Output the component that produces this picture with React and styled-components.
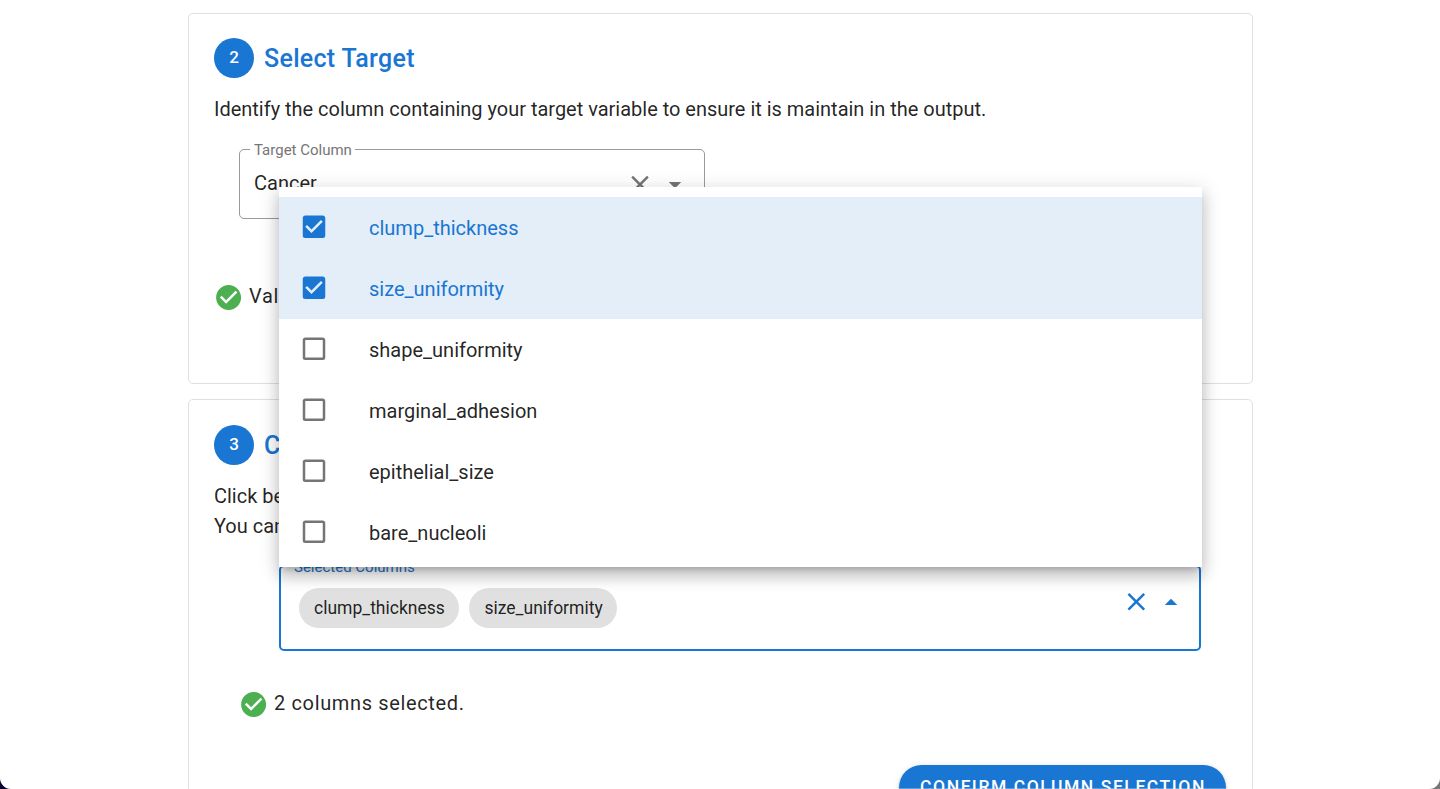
import React from "react";
import styled, { createGlobalStyle } from "styled-components";

const blue = "#1976d2";
const ink = "rgba(0, 0, 0, 0.87)";

const GlobalStyle = createGlobalStyle`
  *, *::before, *::after { box-sizing: border-box; }
  html, body { margin: 0; height: 100%; overflow: hidden; }
  body {
    background: linear-gradient(90deg, #0b0330 0%, #0b0330 50%, #777 50%, #777 100%);
    font-family: Roboto, "Liberation Sans", sans-serif;
    color: ${ink};
  }
`;

const Page = styled.main`
  position: relative;
  height: 789px;
  overflow: hidden;
  padding: 13px 187px 0 188px;
  background: #fff;
  border-radius: 0 0 11px 11px;
  display: flex;
  flex-direction: column;
  gap: 15px;

  &::after {
    content: "";
    position: absolute;
    left: 0;
    right: 0;
    bottom: 0;
    height: 1px;
    background: rgba(255, 255, 255, 0.3);
  }
`;

const Card = styled.section`
  flex: none;
  height: ${(p) => p.$height}px;
  border: 1px solid #e0e0e0;
  border-radius: 5px;
  padding: ${(p) => p.$top}px 25px 0;
  display: flex;
  flex-direction: column;
`;

const Header = styled.header`
  display: flex;
  align-items: center;
  gap: 10px;
  height: 40px;
`;

const StepBadge = styled.span`
  width: 40px;
  height: 40px;
  border-radius: 50%;
  background: ${blue};
  color: #fff;
  font-size: 17px;
  font-weight: 500;
  line-height: 39px;
  text-align: center;
`;

const Title = styled.h2`
  margin: 0;
  padding-top: 2px;
  color: ${blue};
  font-size: 25px;
  font-weight: 500;
  line-height: 40px;
  letter-spacing: 0.3px;
`;

const Copy = styled.p`
  margin: 16px 0 0;
  font-size: 19.98px;
  line-height: 30px;
  white-space: nowrap;
`;

const Field = styled.div`
  position: relative;
  flex: none;
  display: flex;
  align-items: flex-start;
  width: ${(p) => p.$width}px;
  height: ${(p) => p.$height}px;
  margin: ${(p) => p.$margin};
  padding: ${(p) => p.$padding};
  border: ${(p) => (p.$active ? `2px solid ${blue}` : "1px solid #9a9a9a")};
  border-radius: 5px;
  color: ${(p) => (p.$active ? blue : "#757575")};
`;

const FieldLabel = styled.span`
  position: absolute;
  top: -10px;
  left: ${(p) => p.$left}px;
  padding: 0 3px 0 4px;
  background: #fff;
  font-size: 15px;
  line-height: 20px;
  white-space: nowrap;
`;

const FieldValue = styled.span`
  flex: 1;
  color: ${ink};
  font-size: 20px;
  line-height: 30px;
`;

const Chips = styled.div`
  flex: 1;
  display: flex;
  gap: 10px;
  padding-top: 1px;
`;

const Chip = styled.span`
  height: 40px;
  padding: 0 14.7px 0 15px;
  border-radius: 20px;
  background: #e0e0e0;
  color: ${ink};
  font-size: 17.5px;
  line-height: 40px;
`;

const FieldIcons = styled.div`
  display: flex;
  gap: 5px;
  margin-top: ${(p) => p.$offset}px;
`;

const Icon = styled.svg`
  flex: none;
  display: block;
  width: 30px;
  height: 30px;
  fill: currentColor;
`;

const Status = styled.div`
  display: flex;
  align-items: center;
  gap: 5px;
  height: 30px;
  margin: ${(p) => p.$margin};
  font-size: 20px;
  letter-spacing: 0.64px;
  color: #4caf50;
`;

const StatusText = styled.span`
  color: ${ink};
  line-height: 30px;
  padding: 0 0 2px;
  white-space: nowrap;
`;

const ConfirmButton = styled.button`
  align-self: flex-end;
  flex: none;
  width: 327px;
  height: 45px;
  margin: 46px 1px 0 0;
  padding: 0 0 0 1px;
  border: 0;
  border-radius: 23px;
  background: ${blue};
  color: #fff;
  font: 500 17.5px/45px Roboto, sans-serif;
  letter-spacing: 1.5625px;
  text-transform: uppercase;
  white-space: nowrap;
  box-shadow: 0 4px 5px -2px rgba(0, 0, 0, 0.2), 0 2px 3px rgba(0, 0, 0, 0.14),
    0 1px 6px rgba(0, 0, 0, 0.12);
`;

const Menu = styled.ul`
  position: absolute;
  top: 187px;
  left: 279px;
  width: 923px;
  height: 380px;
  margin: 0;
  padding: 10px 0 0;
  overflow: hidden;
  list-style: none;
  background: #fff;
  box-shadow: 0 6px 6px -4px rgba(0, 0, 0, 0.2), 0 10px 13px 1px rgba(0, 0, 0, 0.14),
    0 4px 18px 3px rgba(0, 0, 0, 0.12);
`;

const Option = styled.li`
  display: flex;
  align-items: center;
  gap: 40px;
  height: 61px;
  padding: 0 20px;
  background: ${(p) => (p.$selected ? "#e4eef9" : "#fff")};
  color: ${(p) => (p.$selected ? blue : "#757575")};

  ${Icon} {
    margin-bottom: 2px;
  }
`;

const OptionText = styled.span`
  padding-top: 1px;
  font-size: 20px;
  line-height: 30px;
  color: ${(p) => (p.$selected ? blue : ink)};
`;

const paths = {
  close:
    "M19,6.41L17.59,5L12,10.59L6.41,5L5,6.41L10.59,12L5,17.59L6.41,19L12,13.41L17.59,19L19,17.59L13.41,12L19,6.41Z",
  down: "M7,10L12,15L17,10H7Z",
  up: "M7,15L12,10L17,15H7Z",
  checked:
    "M10,17L5,12L6.41,10.58L10,14.17L17.59,6.58L19,8M19,3H5C3.89,3 3,3.89 3,5V19A2,2 0 0,0 5,21H19A2,2 0 0,0 21,19V5C21,3.89 20.1,3 19,3Z",
  blank:
    "M19,3H5C3.89,3 3,3.89 3,5V19A2,2 0 0,0 5,21H19A2,2 0 0,0 21,19V5C21,3.89 20.1,3 19,3M19,5V19H5V5H19Z",
  success:
    "M12 2C6.5 2 2 6.5 2 12S6.5 22 12 22 22 17.5 22 12 17.5 2 12 2M10 17L5 12L6.41 10.59L10 14.17L17.59 6.58L19 8L10 17Z",
};

// dx and dy nudge the drawing by fractions of a pixel within its 30px box.
const Glyph = ({ name, dx = 0, dy = 0 }) => (
  <Icon viewBox={`${-dx * 0.8} ${-dy * 0.8} 24 24`} aria-hidden="true">
    <path d={paths[name]} />
  </Icon>
);

const options = [
  ["clump_thickness", true],
  ["size_uniformity", true],
  ["shape_uniformity", false],
  ["marginal_adhesion", false],
  ["epithelial_size", false],
  ["bare_nucleoli", false],
];

export default function App() {
  return (
    <>
      <GlobalStyle />
      <Page>
        <Card $height={371} $top={24}>
          <Header>
            <StepBadge>2</StepBadge>
            <Title>Select Target</Title>
          </Header>
          <Copy>
            Identify the column containing your target variable to ensure it is maintain in the
            output.
          </Copy>
          <Field $width={466} $height={70} $margin="25px 0 0 25px" $padding="18px 14px 0 14px">
            <FieldLabel $left={10}>Target Column</FieldLabel>
            <FieldValue>Cancer</FieldValue>
            <FieldIcons $offset={2}>
              <Glyph name="close" dy={-0.4} />
              <Glyph name="down" dy={-0.4} />
            </FieldIcons>
          </Field>
          <Status $margin="63px 0 0">
            <Glyph name="success" dx={-0.4} dy={0.5} />
            <StatusText>Valid</StatusText>
          </Status>
        </Card>

        <Card $height={480} $top={25}>
          <Header>
            <StepBadge>3</StepBadge>
            <Title>Columns</Title>
          </Header>
          <Copy>
            Click below
            <br />
            You can
          </Copy>
          <Field
            $active
            $width={922}
            $height={86}
            $margin="24px 0 0 65px"
            $padding="20px 13px 0 18px"
          >
            <FieldLabel $left={9}>Selected Columns</FieldLabel>
            <Chips>
              <Chip>clump_thickness</Chip>
              <Chip>size_uniformity</Chip>
            </Chips>
            <FieldIcons $offset={0}>
              <Glyph name="close" dx={0.3} dy={-0.3} />
              <Glyph name="up" dy={-0.7} />
            </FieldIcons>
          </Field>
          <Status $margin="38px 0 0 25px">
            <Glyph name="success" dx={-0.4} dy={0.5} />
            <StatusText>2 columns selected.</StatusText>
          </Status>
          <ConfirmButton type="button">Confirm column selection</ConfirmButton>
        </Card>

        <Menu>
          {options.map(([name, selected]) => (
            <Option key={name} $selected={selected}>
              <Glyph name={selected ? "checked" : "blank"} dy={-0.3} />
              <OptionText $selected={selected}>{name}</OptionText>
            </Option>
          ))}
        </Menu>
      </Page>
    </>
  );
}
